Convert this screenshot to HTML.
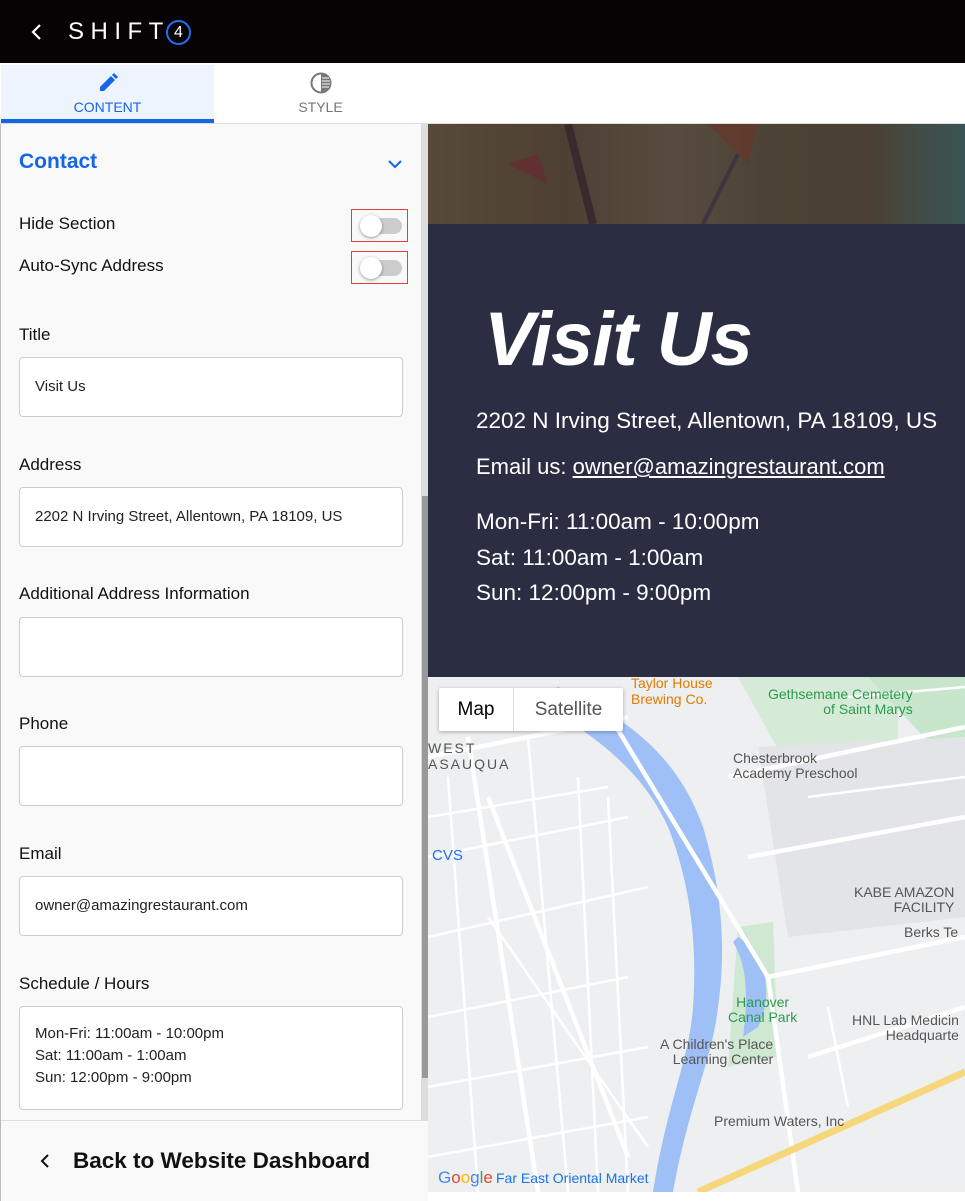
<!DOCTYPE html>
<html><head><meta charset="utf-8"><style>
*{box-sizing:border-box;margin:0;padding:0}
body{width:965px;height:1201px;overflow:hidden;background:#fff;font-family:"Liberation Sans",sans-serif;position:relative}
.top{position:absolute;left:0;top:0;width:965px;height:63px;background:#070203}
.tabs{position:absolute;left:0;top:63px;width:965px;height:61px;background:#fff;border-bottom:1px solid #ddd}
.tab{position:absolute;top:2px;height:58px;width:213px;text-align:center;font-size:14px;padding-top:34px}
.left{position:absolute;left:0;top:124px;width:428px;height:1077px;background:#f9f9f9;border-left:1px solid #bbb}
.lbl{position:absolute;left:18px;font-size:17px;color:#111}
.inp{position:absolute;left:18px;width:384px;height:60px;background:#fff;border:1px solid #ccc;border-radius:4px;font-size:15px;color:#222;padding:0 15px;line-height:58px}
.tog{position:absolute;left:350px;width:57px;height:33px;border:1px solid #e04040}
.tog .tr{position:absolute;left:10px;top:8px;width:40px;height:16px;border-radius:8px;background:#ccc}
.tog .kn{position:absolute;left:8px;top:5px;width:22px;height:22px;border-radius:50%;background:#fff;box-shadow:0 1px 3px rgba(0,0,0,.4)}
.right{position:absolute;left:428px;top:124px;width:537px;height:1077px}
.dark{position:absolute;left:0;top:100px;width:537px;height:453px;background:#2b2d42;color:#fff}
.map{position:absolute;left:0;top:553px;width:537px;height:515px;background:#eeeff1;overflow:hidden}
.mt{position:absolute;font-size:14px;color:#666;white-space:nowrap}
</style></head><body>
<div class="top">
 <svg style="position:absolute;left:30px;top:23px" width="14" height="18"><path d="M10 2 L3 9 L10 16" stroke="#fff" stroke-width="2.2" fill="none"/></svg>
 <div style="position:absolute;left:68px;top:18px;color:#fff;font-size:24px;letter-spacing:6.5px;font-weight:300">SHIFT</div>
 <div style="position:absolute;left:166px;top:20px;width:25px;height:25px;border:2px solid #1f6df0;border-radius:50%;color:#fff;font-size:16px;text-align:center;line-height:21px">4</div>
</div>
<div class="tabs">
 <div class="tab" style="left:1px;background:#eef4fe;color:#1565e8;border-bottom:4px solid #1565e8">CONTENT</div>
 <svg style="position:absolute;left:97px;top:9px" width="22" height="22"><path d="M3 19 L3 15 L14 4 L18 8 L7 19 Z M15 3 L17 1 L21 5 L19 7 Z" fill="#1565e8"/></svg>
 <div class="tab" style="left:214px;color:#777">STYLE</div>
 <svg style="position:absolute;left:309px;top:8px" width="24" height="24"><circle cx="12" cy="12" r="9.5" fill="none" stroke="#777" stroke-width="2"/><path d="M12 3 A9 9 0 0 1 12 21 Z" fill="#777"/><path d="M13 7H20M13 10H21M13 13H21M13 16H20" stroke="#fff" stroke-width="1"/></svg>
</div>
<div class="left">
 <div style="position:absolute;left:420px;top:0;width:7px;height:996px;background:#ddd"></div>
 <div style="position:absolute;left:421px;top:372px;width:6px;height:582px;background:#999"></div>
 <div style="position:absolute;left:18px;top:26px;font-size:21px;font-weight:bold;color:#1565e8">Contact</div>
 <svg style="position:absolute;left:386px;top:34px" width="16" height="12"><path d="M2 3 L8 9 L14 3" stroke="#1565e8" stroke-width="2" fill="none"/></svg>
 <div class="lbl" style="top:90px">Hide Section</div>
 <div class="tog" style="top:85px"><div class="tr"></div><div class="kn"></div></div>
 <div class="lbl" style="top:132px">Auto-Sync Address</div>
 <div class="tog" style="top:127px"><div class="tr"></div><div class="kn"></div></div>
 <div class="lbl" style="top:201px">Title</div>
 <div class="inp" style="top:233px">Visit Us</div>
 <div class="lbl" style="top:331px">Address</div>
 <div class="inp" style="top:363px">2202 N Irving Street, Allentown, PA 18109, US</div>
 <div class="lbl" style="top:460px">Additional Address Information</div>
 <div class="inp" style="top:493px"></div>
 <div class="lbl" style="top:590px">Phone</div>
 <div class="inp" style="top:622px"></div>
 <div class="lbl" style="top:720px">Email</div>
 <div class="inp" style="top:752px">owner@amazingrestaurant.com</div>
 <div class="lbl" style="top:850px">Schedule / Hours</div>
 <div class="inp" style="top:882px;height:104px;line-height:22px;padding-top:16px">Mon-Fri: 11:00am - 10:00pm<br>Sat: 11:00am - 1:00am<br>Sun: 12:00pm - 9:00pm</div>
 <div style="position:absolute;left:0;top:996px;width:427px;height:81px;background:#f9f9f9;border-top:1px solid #ddd"></div>
 <svg style="position:absolute;left:38px;top:1028px" width="12" height="18"><path d="M9 3 L3 9 L9 15" stroke="#111" stroke-width="2" fill="none"/></svg>
 <div style="position:absolute;left:72px;top:1024px;font-size:22.5px;font-weight:bold;color:#111">Back to Website Dashboard</div>
</div>
<div class="right">
 <div style="position:absolute;left:0;top:0;width:537px;height:100px;background:linear-gradient(90deg,#574a37 0%,#4e3f33 25%,#574c3f 45%,#4b4235 65%,#4a4033 82%,#3a5555 100%)"></div>
 <svg style="position:absolute;left:0;top:0" width="537" height="100"><path d="M140 0 L165 100" stroke="#3a2a30" stroke-width="8"/><path d="M275 100 L310 30" stroke="#3f3440" stroke-width="4"/><path d="M80 40 L110 30 L120 60 Z" fill="#6a2a30" opacity=".7"/><path d="M280 0 L330 0 L320 40 Z" fill="#6a3628" opacity=".6"/></svg>
 <div class="dark">
  <div style="position:absolute;left:56px;top:72px;font-size:76px;font-style:italic;font-weight:bold;letter-spacing:-1px">Visit Us</div>
  <div style="position:absolute;left:48px;top:184px;font-size:22.5px">2202 N Irving Street, Allentown, PA 18109, US</div>
  <div style="position:absolute;left:48px;top:230px;font-size:22px">Email us: <u>owner@amazingrestaurant.com</u></div>
  <div style="position:absolute;left:48px;top:280px;font-size:22.5px;line-height:35.5px">Mon-Fri: 11:00am - 10:00pm<br>Sat: 11:00am - 1:00am<br>Sun: 12:00pm - 9:00pm</div>
 </div>
 <div class="map">
  <svg width="537" height="515" style="position:absolute;left:0;top:0">
   <path d="M310 0 L470 0 L470 80 L360 90 Z" fill="#cfe8d2" opacity=".8"/>
   <path d="M440 0 L537 0 L537 70 L510 75 Z" fill="#c7e6cc"/>
   <path d="M330 70 L537 60 L537 240 L360 260 Z" fill="#e3e4e7"/>
   <path d="M310 250 L345 245 L350 380 L300 390 Z" fill="#cfe8d2"/>
   <path d="M130 10 C200 40 250 80 275 150 C290 200 300 260 290 330 C285 380 260 430 245 515 L225 515 C238 430 262 380 265 330 C270 260 260 200 240 150 C215 95 170 60 110 25 Z" fill="#9ec0f7"/>
   <path d="M310 260 C340 280 345 320 330 350 L315 360 C320 320 320 290 305 265 Z" fill="#9ec0f7"/>
   <g stroke="#fff" stroke-width="2.5" fill="none">
    <path d="M0 140 L180 110"/><path d="M0 180 L200 140"/><path d="M0 260 L220 210"/><path d="M0 340 L200 300"/><path d="M0 410 L220 370"/><path d="M0 480 L220 440"/>
    <path d="M100 60 L140 515"/><path d="M150 100 L170 515"/><path d="M180 120 L200 515"/><path d="M20 100 L50 515"/><path d="M60 240 L220 470"/>
    <path d="M380 120 L537 100"/><path d="M400 330 L420 430"/><path d="M420 20 L537 10"/>
   </g>
   <g stroke="#fff" stroke-width="4.5" fill="none">
    <path d="M0 80 L200 40"/><path d="M40 60 L110 515"/><path d="M60 120 L200 480"/>
    <path d="M170 20 L340 300 L370 515"/><path d="M340 300 L537 260"/><path d="M300 100 L537 50"/><path d="M320 180 L537 140"/><path d="M380 380 L537 330"/>
   </g>
   <path d="M270 515 L537 395" stroke="#f7d77c" stroke-width="7"/>
  </svg>
  <div style="position:absolute;left:11px;top:11px;width:184px;height:43px;background:#fff;box-shadow:0 1px 4px rgba(0,0,0,.3);border-radius:2px"></div>
  <div style="position:absolute;left:11px;top:11px;width:75px;height:43px;border-right:1px solid #ddd;font-size:19px;color:#000;text-align:center;line-height:43px">Map</div>
  <div style="position:absolute;left:86px;top:11px;width:109px;height:43px;font-size:19px;color:#555;text-align:center;line-height:43px">Satellite</div>
  <div class="mt" style="left:203px;top:-2px;color:#e27a00;font-size:14px">Taylor House<br>Brewing Co.</div>
  <div class="mt" style="left:340px;top:10px;color:#2e9a4e;font-size:14px;text-align:right;line-height:15px">Gethsemane Cemetery<br>of Saint Marys</div>
  <div class="mt" style="left:0;top:63px;font-size:14px;letter-spacing:2px;line-height:16px;color:#555">WEST<br>ASAUQUA</div>
  <div class="mt" style="left:305px;top:74px;color:#555;line-height:15px">Chesterbrook<br>Academy Preschool</div>
  <div class="mt" style="left:4px;top:170px;color:#1a73e8;font-size:15px">CVS</div>
  <div class="mt" style="left:426px;top:208px;color:#555;line-height:15px;text-align:right">KABE AMAZON<br>FACILITY</div>
  <div class="mt" style="left:476px;top:247px;color:#555">Berks Te</div>
  <div class="mt" style="left:300px;top:318px;color:#2e9a4e;line-height:15px;text-align:center">Hanover<br>Canal Park</div>
  <div class="mt" style="left:424px;top:336px;color:#555;line-height:15px;text-align:right">HNL Lab Medicin<br>Headquarte</div>
  <div class="mt" style="left:232px;top:360px;color:#555;line-height:15px;text-align:right">A Children's Place<br>Learning Center</div>
  <div class="mt" style="left:286px;top:436px;color:#555">Premium Waters, Inc</div>
  <div class="mt" style="left:10px;top:491px;font-size:17px;color:#4285f4">G<span style="color:#ea4335">o</span><span style="color:#fbbc05">o</span>g<span style="color:#34a853">l</span><span style="color:#ea4335">e</span></div>
  <div class="mt" style="left:68px;top:493px;color:#1a73e8">Far East Oriental Market</div>
  <div style="position:absolute;left:0;top:515px;width:537px;height:10px;background:#2b2d42"></div>
 </div>
</div>
</body></html>
